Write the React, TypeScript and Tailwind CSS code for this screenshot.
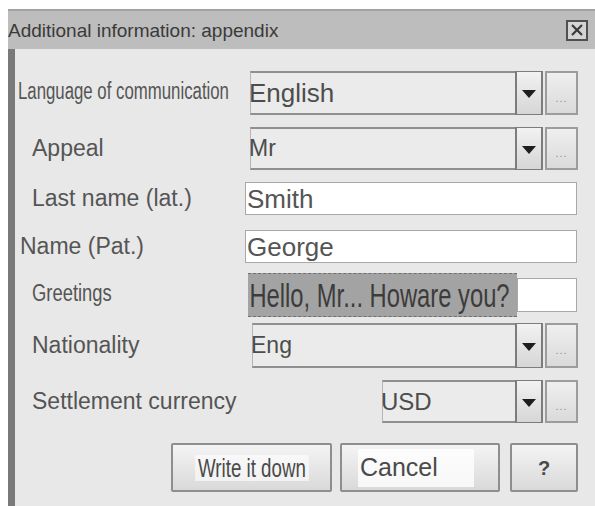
import React from "react";

const sans = { fontFamily: '"Liberation Sans", Arial, sans-serif' };

function DropButtons() {
  return (
    <div className="flex h-full shrink-0 gap-[2px]">
      <div className="flex h-full w-[28px] items-center justify-center border-x-2 border-y border-[#7c7c7c] bg-gradient-to-b from-[#f2f2f2] to-[#d6d6d6]">
        <svg width="14" height="8" viewBox="0 0 14 8" className="mt-[2px]">
          <path d="M0 0 L14 0 L7 8 Z" fill="#1e1e1e" />
        </svg>
      </div>
      <div className="flex h-full w-[33px] items-center justify-center border-2 border-[#9c9c9c] bg-gradient-to-b from-[#efefef] to-[#dadada]">
        <span className="mt-[10px] text-[11px] leading-none tracking-[1px] text-[#8f8f8f]">...</span>
      </div>
    </div>
  );
}

function Select({ value, size, className }: { value: string; size: string; className: string }) {
  return (
    <div className={`flex ${className}`}>
      <div className="flex h-full flex-1 items-center border-y-2 border-l border-[#8f8f8f] border-l-[#b5b5b5] bg-[#ebebeb] pr-1">
        <span className={`${size} -ml-[2px] leading-none text-[#4d4d4d]`}>{value}</span>
      </div>
      <DropButtons />
    </div>
  );
}

function Row({
  label,
  labelClass,
  children,
  className,
}: {
  label: React.ReactNode;
  labelClass: string;
  children: React.ReactNode;
  className: string;
}) {
  return (
    <div className={`flex items-center ${className}`}>
      <div className={`w-[232px] shrink-0 whitespace-nowrap text-[#555] ${labelClass}`}>{label}</div>
      {children}
    </div>
  );
}

export default function App() {
  return (
    <div className="h-[506px] w-[595px] overflow-hidden bg-white pl-[8px] pt-[9px]" style={sans}>
      <div className="flex h-full flex-col border-l-[7px] border-[#7a7a7a] bg-[#e8e8e8]">
        {/* title bar */}
        <div className="-ml-[7px] flex h-[40px] items-center justify-between border-t-2 border-[#a2a2a2] bg-[#bdbdbd] pr-[7px]">
          <span className="text-[19px] leading-none text-[#3a3a3a]">Additional information: appendix</span>
          <div className="flex h-[21px] w-[22px] items-center justify-center border-2 border-[#505050] bg-[#d4d4d4]">
            <svg width="12" height="12" viewBox="0 0 12 12">
              <path d="M1 1 L11 11 M11 1 L1 11" stroke="#3a3a3a" strokeWidth="2.2" />
            </svg>
          </div>
        </div>

        <Row
          className="mt-[22px] h-[44px]"
          labelClass="pl-[3px]"
          label={
            <span className="inline-block origin-left scale-x-[0.73] text-[23px] leading-none">
              Language of communication
            </span>
          }
        >
          <Select value="English" size="text-[26px]" className="ml-[3px] h-[44px] w-[328px]" />
        </Row>

        <Row className="mt-[12px] h-[43px]" labelClass="pl-[17px] text-[23px] leading-none" label="Appeal">
          <Select value="Mr" size="text-[23px]" className="ml-[3px] h-[43px] w-[328px]" />
        </Row>

        <Row className="mt-[12px] h-[33px]" labelClass="pl-[17px] text-[23px] leading-none" label="Last name (lat.)">
          <div className="-ml-[2px] flex h-[33px] w-[332px] items-center border border-[#a8a8a8] bg-white">
            <span className="pl-[1px] text-[26px] leading-none text-[#555]">Smith</span>
          </div>
        </Row>

        <Row className="mt-[15px] h-[33px]" labelClass="pl-[5px] text-[23px] leading-none" label="Name (Pat.)">
          <div className="-ml-[2px] flex h-[33px] w-[332px] items-center border border-[#a8a8a8] bg-white">
            <span className="pl-[1px] text-[26px] leading-none text-[#555]">George</span>
          </div>
        </Row>

        <Row
          className="mt-[10px] h-[44px]"
          labelClass="pl-[17px]"
          label={
            <span className="inline-block origin-left scale-x-[0.8] text-[23px] leading-none">Greetings</span>
          }
        >
          <div className="ml-[1px] flex h-[44px] w-[329px] items-center">
            <div className="flex h-[44px] w-[269px] items-center overflow-hidden border-y border-dashed border-[#6f6f6f] bg-[#a3a3a3]">
              <span className="inline-block origin-left scale-x-[0.72] whitespace-nowrap pl-[2px] text-[33px] leading-none text-[#3c3c3c]">
                Hello, Mr... Howare you?
              </span>
            </div>
            <div className="h-[34px] flex-1 border border-[#a8a8a8] bg-white" />
          </div>
        </Row>

        <Row className="mt-[6px] h-[45px]" labelClass="pl-[17px] text-[23px] leading-none" label="Nationality">
          <Select value="Eng" size="text-[23px]" className="ml-[5px] h-[45px] w-[326px]" />
        </Row>

        <Row className="mt-[12px] h-[43px]" labelClass="pl-[17px] text-[23px] leading-none" label="Settlement currency">
          <Select value="USD" size="text-[24px]" className="ml-[135px] h-[43px] w-[196px]" />
        </Row>

        {/* action buttons */}
        <div className="mt-[20px] flex h-[49px] pl-[156px]">
          <button className="flex h-[49px] w-[161px] items-center justify-center rounded-[2px] border-2 border-[#8e8e8e] bg-gradient-to-b from-[#f4f4f4] to-[#d9d9d9]">
            <span className="inline-block scale-x-[0.72] whitespace-nowrap bg-white/60 px-1 text-[26px] leading-none text-[#4a4a4a]">
              Write it down
            </span>
          </button>
          <button className="ml-[8px] flex h-[49px] w-[160px] items-center rounded-[2px] border-2 border-[#8e8e8e] bg-gradient-to-b from-[#f4f4f4] to-[#d9d9d9] pl-[16px]">
            <span className="flex h-[38px] w-[116px] items-center bg-white/80 pl-[2px] text-[25px] leading-none text-[#4a4a4a]">
              Cancel
            </span>
          </button>
          <button className="ml-[10px] flex h-[49px] w-[68px] items-center justify-center rounded-[2px] border-2 border-[#8e8e8e] bg-gradient-to-b from-[#f4f4f4] to-[#d9d9d9]">
            <span className="text-[20px] font-bold leading-none text-[#4a4a4a]">?</span>
          </button>
        </div>
      </div>
    </div>
  );
}
